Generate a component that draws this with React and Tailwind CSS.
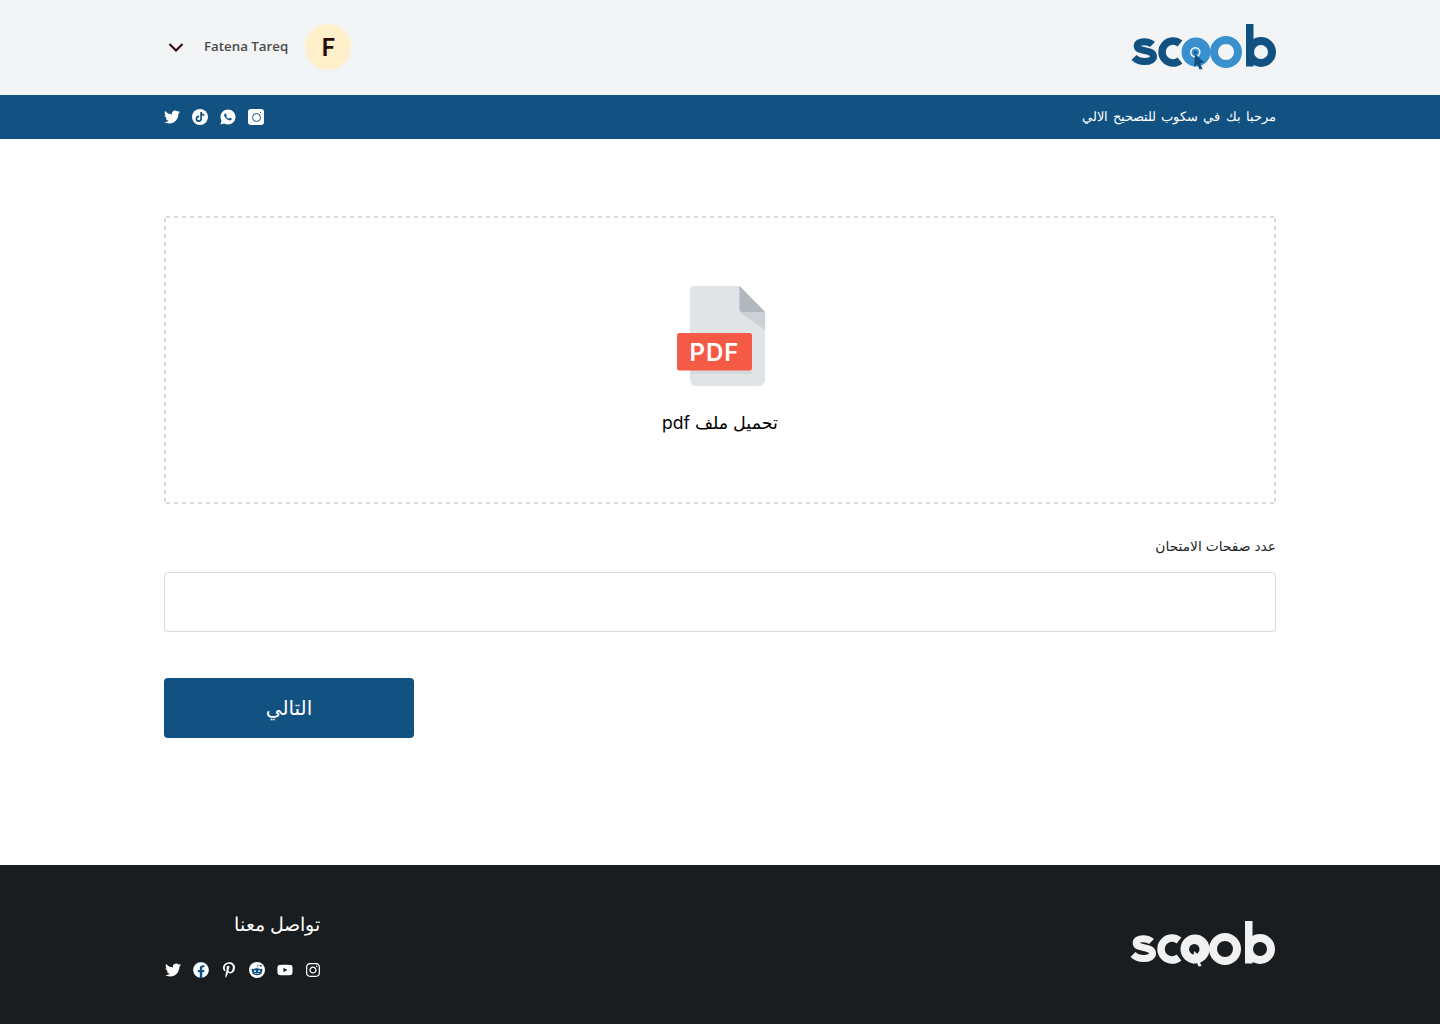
import React from 'react';
import { FaTwitter, FaTiktok, FaFacebook, FaPinterestP, FaRedditAlien, FaYoutube, FaInstagram } from 'react-icons/fa';
import { RiWhatsappFill } from 'react-icons/ri';

const arabic = "font-['Inter','DejaVu_Sans',sans-serif]";

// logo is drawn, colours differ between header and footer
const Logo = ({ dark, light, ring, ringFill, dot, arrow }) => (
  <svg width="145" height="46" viewBox="0 0 145 46" fill="none">
    <path d="M21.500 20.500c-1.500-1.500-4.500-2.800-8.500-2.800-4.500 0-6.800 1.800-6.800 4.300 0 6.500 16.300 2.500 16.300 10.500 0 3-3.300 5-9 5-4.500 0-8-1.500-10.500-4" stroke={dark} strokeWidth="7" />
    <path d="M49 19.500A11 11 0 1 0 49 36.500" stroke={dark} strokeWidth="7.500" />
    <circle cx="65" cy="28" r="14.500" fill={light} />
    <circle cx="64.300" cy="28.300" r="4.500" fill={ringFill} stroke={ring} strokeWidth="1.500" />
    <circle cx="64.300" cy="28.300" r="1.500" fill={dot} />
    <path d="M64 30L73.500 38.500L69 39.500L71.500 45L68.500 45.500L66.500 40.500L63 43Z" fill={arrow} />
    <circle cx="95" cy="28" r="12" stroke={light} strokeWidth="8" />
    <rect x="115" y="0" width="7.500" height="42.500" fill={dark} />
    <circle cx="130" cy="28" r="11" stroke={dark} strokeWidth="8" />
  </svg>
);

const PdfIcon = () => (
  <svg className="ml-[2px]" width="88" height="100" viewBox="0 0 88 100">
    <path d="M17 0h45.500L88 26v68a6 6 0 0 1-6 6H19a6 6 0 0 1-6-6V4a4 4 0 0 1 4-4z" fill="#e1e4e7" />
    <path d="M62.500 0L88 26v18L62.500 26z" fill="#cbd1d7" />
    <path d="M62.500 0L88 26H66a3.500 3.500 0 0 1-3.500-3.500z" fill="#b0b7bf" />
    <path d="M13 84h62v4H13z" fill="#d5d9dd" />
    <rect x="0" y="47" width="75" height="37.500" rx="2.500" fill="#f55a46" />
    <text x="37.500" y="75" textAnchor="middle" fontFamily="Inter, sans-serif" fontSize="24" fontWeight="600" letterSpacing="1" fill="#ffffff">PDF</text>
  </svg>
);

const CircleIcon = ({ Icon, size = 'text-[10px]' }) => (
  <span className="flex h-4 w-4 items-center justify-center rounded-full bg-white text-[#125282]">
    <Icon className={size} />
  </span>
);

const InstaSquare = () => (
  <span className="relative flex h-4 w-4 items-center justify-center rounded-[3px] bg-white">
    <span className="h-[9px] w-[9px] rounded-full border-[1.5px] border-[#125282]" />
    <span className="absolute right-[3px] top-[3px] h-px w-px bg-[#125282]" />
  </span>
);

const Header = () => (
  <header dir="rtl">
    <div className="flex h-[95px] items-center justify-between bg-[#f3f4f6] px-[164px] pb-px">
      <Logo dark="#125282" light="#3a90cf" ring="#ffffff" ringFill="#3a90cf" dot="#125282" arrow="#125282" />
      <div className="flex items-center pl-1">
        <div className="flex h-[46px] w-[46px] items-center justify-center rounded-full bg-[#fff0cb] font-['Lato',sans-serif] text-[24px] font-bold text-[#2c0a0a]">F</div>
        <span className="mr-[17px] font-['Open_Sans',sans-serif] text-[13.3px] font-semibold text-[#4a4a4a]" dir="ltr">Fatena Tareq</span>
        <svg className="mr-5 h-[9px] w-4" viewBox="0 0 16 9" fill="none">
          <path d="M1.500 1l6.500 6.500L14.500 1" stroke="#2c0a14" strokeWidth="2" />
        </svg>
      </div>
    </div>
    <div className="flex h-11 items-center justify-between bg-[#125282] px-[164px] text-white">
      <p className={`${arabic} text-[13px] font-light [word-spacing:1.6px]`}>مرحبا بك في سكوب للتصحيح الالي</p>
      <div className="flex flex-row-reverse items-center gap-3" dir="ltr">
        <InstaSquare />
        <RiWhatsappFill className="-mx-px text-[18px]" />
        <CircleIcon Icon={FaTiktok} />
        <FaTwitter className="text-base" />
      </div>
    </div>
  </header>
);

const UploadForm = () => (
  <main dir="rtl" className="h-[726px] px-[164px] pt-[77px]">
    <div className="flex h-[288px] flex-col items-center justify-center rounded bg-[linear-gradient(to_right,#d9d9d9_50%,transparent_50%),linear-gradient(to_right,#d9d9d9_50%,transparent_50%),linear-gradient(to_bottom,#d9d9d9_50%,transparent_50%),linear-gradient(to_bottom,#d9d9d9_50%,transparent_50%)] bg-[length:8px_2px,8px_2px,2px_8px,2px_8px] bg-[position:2px_0,2px_100%,0_2px,100%_2px] [background-repeat:repeat-x,repeat-x,repeat-y,repeat-y] pt-[2px]">
      <PdfIcon />
      <p className={`${arabic} mt-6 text-[17.5px] text-black`}>تحميل ملف pdf</p>
    </div>
    <label className={`${arabic} mt-8 block text-[13.8px] text-[#212529]`}>عدد صفحات الامتحان</label>
    <input className="mt-[15px] block h-[60px] w-full rounded border border-[#d8dadc] bg-white" />
    <div className="mt-[46px] flex justify-end">
      <button className={`${arabic} h-[60px] w-[250px] rounded bg-[#125282] text-xl text-white`}>التالي</button>
    </div>
  </main>
);

const Footer = () => (
  <footer dir="rtl" className="flex h-[159px] items-start justify-between bg-[#191d20] px-[164px] pt-[46px] text-white">
    <div className="mr-px mt-[10px]">
      <Logo dark="#f1f1f1" light="#f1f1f1" ring="#191d20" ringFill="#191d20" dot="#191d20" arrow="#f1f1f1" />
    </div>
    <div className="flex flex-col items-start pl-px">
      <p className={`${arabic} pr-px text-[18.6px] font-light`}>تواصل معنا</p>
      <div className="mt-[23px] flex flex-row-reverse items-center gap-3" dir="ltr">
        <FaInstagram className="text-base" />
        <FaYoutube className="text-base" />
        <CircleIcon Icon={FaRedditAlien} size="text-xs" />
        <FaPinterestP className="text-base" />
        <span className="flex h-4 w-4 items-center justify-center rounded-full bg-[#125282]">
          <FaFacebook className="text-base" />
        </span>
        <FaTwitter className="text-base" />
      </div>
    </div>
  </footer>
);

export default function App() {
  return (
    <div className="min-h-[1024px] bg-white">
      <Header />
      <UploadForm />
      <Footer />
    </div>
  );
}
